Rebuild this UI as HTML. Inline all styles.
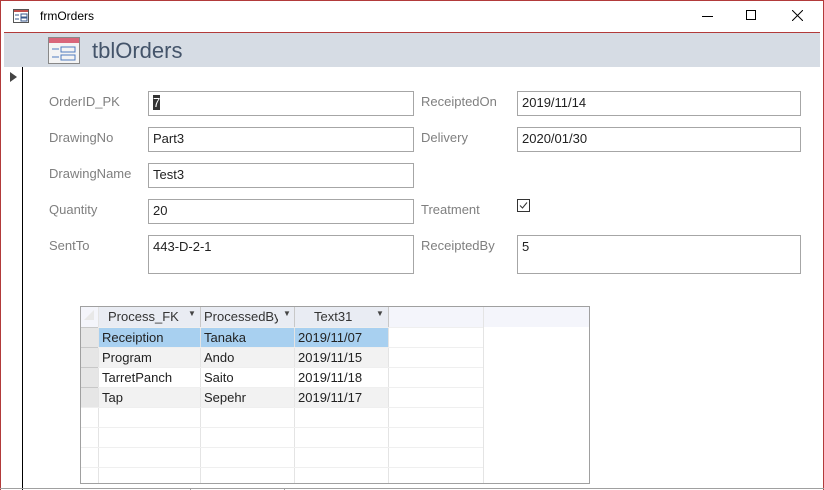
<!DOCTYPE html>
<html><head><style>
*{margin:0;padding:0;box-sizing:border-box}
body{width:824px;height:490px;position:relative;background:#fff;font-family:"Liberation Sans",sans-serif;overflow:hidden}
.a{position:absolute}
.lbl{position:absolute;font-size:13px;color:#7f7f7f}
.box{position:absolute;border:1px solid #a6a6a6;background:#fff;font-size:13px;color:#222;padding:3px 0 0 4px}
.g{position:absolute;font-size:13px;color:#222;white-space:nowrap;overflow:hidden}
</style></head><body>
<div class="a" style="left:0;top:0;width:824px;height:490px;border:1px solid #b23a3a;border-bottom:none"></div>
<svg class="a" style="left:13px;top:9px" width="16" height="14"><rect x="0.5" y="0.5" width="15" height="13" fill="#fff" stroke="#555"/><rect x="1" y="1" width="14" height="2" fill="#c0504d"/><path d="M2 6h4M2 10h4M8 5h6v3H8zM8 9h6v3H8z" stroke="#3a5a8c" fill="none"/></svg>
<div class="a" style="left:40px;top:9px;font-size:12px;color:#000">frmOrders</div>
<div class="a" style="left:702px;top:16px;width:11px;height:1px;background:#000"></div>
<div class="a" style="left:746px;top:10px;width:10px;height:10px;border:1px solid #000"></div>
<svg class="a" style="left:792px;top:10px" width="11" height="11"><path d="M0 0L11 11M11 0L0 11" stroke="#000"/></svg>
<div class="a" style="left:4px;top:32px;width:816px;height:1px;background:#b23a3a"></div>
<div class="a" style="left:4px;top:33px;width:816px;height:34px;background:#d6dce4"></div>
<svg class="a" style="left:48px;top:37px" width="32" height="27"><rect x="0.5" y="0.5" width="31" height="26" fill="#f4f4f4" stroke="#888"/><rect x="1" y="1" width="30" height="5" fill="#d9667a"/><path d="M4 12h7M4 20h7M13 10h14v5H13zM13 18h14v5H13z" stroke="#4f7bbf" fill="none"/></svg>
<div class="a" style="left:92px;top:38px;font-size:22px;color:#44546a">tblOrders</div>
<div class="a" style="left:22px;top:67px;width:1px;height:423px;background:#000"></div>
<svg class="a" style="left:10px;top:72px" width="8" height="10"><path d="M0 0L7 5L0 10z" fill="#444"/></svg>
<div class="lbl" style="left:49px;top:94px">OrderID_PK</div>
<div class="box" style="left:148px;top:91px;width:266px;height:25px"><span style="background:#333;color:#fff">7</span></div>
<div class="lbl" style="left:49px;top:130px">DrawingNo</div>
<div class="box" style="left:148px;top:127px;width:266px;height:25px">Part3</div>
<div class="lbl" style="left:49px;top:166px">DrawingName</div>
<div class="box" style="left:148px;top:163px;width:266px;height:25px">Test3</div>
<div class="lbl" style="left:49px;top:202px">Quantity</div>
<div class="box" style="left:148px;top:199px;width:266px;height:25px">20</div>
<div class="lbl" style="left:49px;top:238px">SentTo</div>
<div class="box" style="left:148px;top:235px;width:266px;height:39px">443-D-2-1</div>
<div class="lbl" style="left:421px;top:94px">ReceiptedOn</div>
<div class="box" style="left:517px;top:91px;width:284px;height:25px">2019/11/14</div>
<div class="lbl" style="left:421px;top:130px">Delivery</div>
<div class="box" style="left:517px;top:127px;width:284px;height:25px">2020/01/30</div>
<div class="lbl" style="left:421px;top:202px">Treatment</div>
<svg class="a" style="left:517px;top:199px" width="13" height="13"><rect x="0.5" y="0.5" width="12" height="12" fill="#fff" stroke="#333"/><path d="M3 6.5L5.5 9L10 3.5" stroke="#333" fill="none"/></svg>
<div class="lbl" style="left:421px;top:238px">ReceiptedBy</div>
<div class="box" style="left:517px;top:235px;width:284px;height:39px">5</div>
<!-- grid -->
<div class="a" style="left:80px;top:306px;width:510px;height:178px;border:1px solid #a0a0a0;background:#fff"></div>
<div class="a" style="left:81px;top:307px;width:508px;height:20px;background:#f4f5fb"></div>
<div class="a" style="left:98px;top:307px;width:290px;height:20px;background:#e9ecf3"></div>
<div class="a" style="left:81px;top:327px;width:17px;height:80px;background:#e6e6e6"></div>
<div class="a" style="left:98px;top:327px;width:290px;height:20px;background:#a8d0f0"></div>
<div class="a" style="left:98px;top:347px;width:290px;height:20px;background:#f2f2f2"></div>
<div class="a" style="left:98px;top:387px;width:290px;height:20px;background:#f2f2f2"></div>
<svg class="a" style="left:81px;top:307px" width="508" height="176">
<g stroke="#e4e4e4"><path d="M17.5 0V176M119.5 0V176M213.5 0V176M307.5 0V176M402.5 0V176"/>
<path d="M0 20.5H402M0 40.5H402M0 60.5H402M0 80.5H402M0 100.5H402M0 120.5H402M0 140.5H402M0 160.5H402" stroke="#efefef"/>
<path d="M0 20.5H17M0 40.5H17M0 60.5H17M0 80.5H17" stroke="#c8c8c8"/>
<path d="M119.5 0V20M213.5 0V20M307.5 0V20" stroke="#c8c8c8"/></g>
<path d="M3 13L13 3V13z" fill="#e8e8e8"/>
</svg>
<div class="g" style="left:108px;top:309px;color:#333">Process_FK</div><div class="g" style="left:188px;top:309px;font-size:8px;color:#444">▼</div>
<div class="g" style="left:204px;top:309px;width:74px;color:#333">ProcessedBy</div><div class="g" style="left:283px;top:309px;font-size:8px;color:#444">▼</div>
<div class="g" style="left:314px;top:309px;color:#333">Text31</div><div class="g" style="left:376px;top:309px;font-size:8px;color:#444">▼</div>
<div class="g" style="left:102px;top:330px">Receiption</div><div class="g" style="left:204px;top:330px">Tanaka</div><div class="g" style="left:298px;top:330px">2019/11/07</div>
<div class="g" style="left:102px;top:350px">Program</div><div class="g" style="left:204px;top:350px">Ando</div><div class="g" style="left:298px;top:350px">2019/11/15</div>
<div class="g" style="left:102px;top:370px">TarretPanch</div><div class="g" style="left:204px;top:370px">Saito</div><div class="g" style="left:298px;top:370px">2019/11/18</div>
<div class="g" style="left:102px;top:390px">Tap</div><div class="g" style="left:204px;top:390px">Sepehr</div><div class="g" style="left:298px;top:390px">2019/11/17</div>
<div class="a" style="left:0;top:488px;width:824px;height:1px;background:#a0a0a0"></div>
<div class="a" style="left:190px;top:488px;width:1px;height:2px;background:#a0a0a0"></div>
<div class="a" style="left:284px;top:488px;width:1px;height:2px;background:#a0a0a0"></div>
</body></html>
